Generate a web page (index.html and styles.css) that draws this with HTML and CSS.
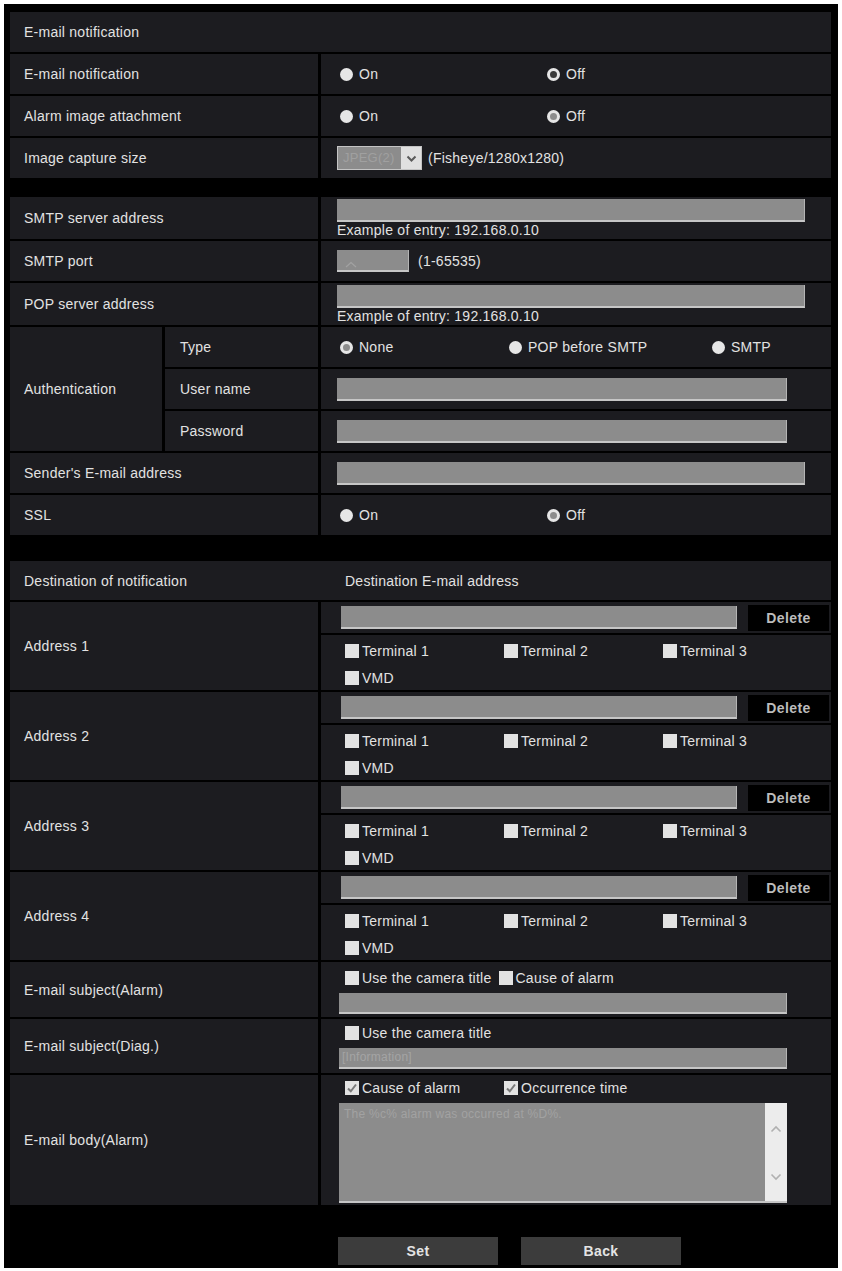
FILE: index.html
```html
<!doctype html>
<html lang="en">
  <head>
    <meta charset="UTF-8" />
    <meta name="viewport" content="width=device-width, initial-scale=1.0">
    <title>E-mail notification</title>
    <link rel="stylesheet" href="styles.css">
  </head>
  <body>
    <div class="panel">

      <!-- general settings -->
      <div class="group">
        <div class="row head">
          <div class="cell label">E-mail notification</div>
        </div>
        <div class="row">
          <div class="cell label">E-mail notification</div>
          <div class="cell value">
            <span class="opt w207"><i class="radio"></i>On</span>
            <span class="opt"><i class="radio sel dark"></i>Off</span>
          </div>
        </div>
        <div class="row">
          <div class="cell label">Alarm image attachment</div>
          <div class="cell value">
            <span class="opt w207"><i class="radio"></i>On</span>
            <span class="opt"><i class="radio sel"></i>Off</span>
          </div>
        </div>
        <div class="row">
          <div class="cell label">Image capture size</div>
          <div class="cell value">
            <div class="select">
              <span class="select-text">JPEG(2)</span>
              <span class="select-arrow">
                <svg width="11" height="7" viewBox="0 0 11 7"><path d="M1.5 1.5l4 4 4-4" stroke="#5a5a5a" stroke-width="2" fill="none"/></svg>
              </span>
            </div>
            <span class="after-select">(Fisheye/1280x1280)</span>
          </div>
        </div>
      </div>

      <!-- server settings -->
      <div class="group">
        <div class="row tall">
          <div class="cell label">SMTP server address</div>
          <div class="cell value stack">
            <div class="input w468"></div>
            <div class="hint">Example of entry: 192.168.0.10</div>
          </div>
        </div>
        <div class="row">
          <div class="cell label">SMTP port</div>
          <div class="cell value">
            <div class="input port">
              <svg width="12" height="7" viewBox="0 0 12 7"><path d="M1 6l5-4.5 5 4.5" stroke="#a2a2a2" stroke-width="1.2" fill="none"/></svg>
            </div>
            <span class="after-port">(1-65535)</span>
          </div>
        </div>
        <div class="row tall">
          <div class="cell label">POP server address</div>
          <div class="cell value stack">
            <div class="input w468"></div>
            <div class="hint">Example of entry: 192.168.0.10</div>
          </div>
        </div>
        <div class="auth">
          <div class="cell label auth-label">Authentication</div>
          <div class="cell label sub">Type</div>
          <div class="cell value">
            <span class="opt w169"><i class="radio sel"></i>None</span>
            <span class="opt w203"><i class="radio"></i>POP before SMTP</span>
            <span class="opt"><i class="radio"></i>SMTP</span>
          </div>
          <div class="cell label sub">User name</div>
          <div class="cell value"><div class="input w450"></div></div>
          <div class="cell label sub">Password</div>
          <div class="cell value"><div class="input w450"></div></div>
        </div>
        <div class="row">
          <div class="cell label">Sender's E-mail address</div>
          <div class="cell value"><div class="input w468"></div></div>
        </div>
        <div class="row">
          <div class="cell label">SSL</div>
          <div class="cell value">
            <span class="opt w207"><i class="radio"></i>On</span>
            <span class="opt"><i class="radio sel"></i>Off</span>
          </div>
        </div>
      </div>

      <!-- destinations -->
      <div class="group">
        <div class="row head dest-head">
          <div class="cell label">
            <span class="dest-left">Destination of notification</span>
            <span class="dest-right">Destination E-mail address</span>
          </div>
        </div>

        <div class="address">
          <div class="cell label addr-label">Address 1</div>
          <div class="cell value addr-input">
            <div class="input w396"></div>
            <button class="delete-btn">Delete</button>
          </div>
          <div class="cell terminals">
            <span class="chk"><i class="box"></i>Terminal 1</span>
            <span class="chk"><i class="box"></i>Terminal 2</span>
            <span class="chk"><i class="box"></i>Terminal 3</span>
            <span class="chk"><i class="box"></i>VMD</span>
          </div>
        </div>
        <div class="address">
          <div class="cell label addr-label">Address 2</div>
          <div class="cell value addr-input">
            <div class="input w396"></div>
            <button class="delete-btn">Delete</button>
          </div>
          <div class="cell terminals">
            <span class="chk"><i class="box"></i>Terminal 1</span>
            <span class="chk"><i class="box"></i>Terminal 2</span>
            <span class="chk"><i class="box"></i>Terminal 3</span>
            <span class="chk"><i class="box"></i>VMD</span>
          </div>
        </div>
        <div class="address">
          <div class="cell label addr-label">Address 3</div>
          <div class="cell value addr-input">
            <div class="input w396"></div>
            <button class="delete-btn">Delete</button>
          </div>
          <div class="cell terminals">
            <span class="chk"><i class="box"></i>Terminal 1</span>
            <span class="chk"><i class="box"></i>Terminal 2</span>
            <span class="chk"><i class="box"></i>Terminal 3</span>
            <span class="chk"><i class="box"></i>VMD</span>
          </div>
        </div>
        <div class="address">
          <div class="cell label addr-label">Address 4</div>
          <div class="cell value addr-input">
            <div class="input w396"></div>
            <button class="delete-btn">Delete</button>
          </div>
          <div class="cell terminals">
            <span class="chk"><i class="box"></i>Terminal 1</span>
            <span class="chk"><i class="box"></i>Terminal 2</span>
            <span class="chk"><i class="box"></i>Terminal 3</span>
            <span class="chk"><i class="box"></i>VMD</span>
          </div>
        </div>

        <div class="row subj-alarm">
          <div class="cell label">E-mail subject(Alarm)</div>
          <div class="cell value stack subj">
            <div class="chk-line">
              <span class="chk inline"><i class="box"></i>Use the camera title</span>
              <span class="chk"><i class="box"></i>Cause of alarm</span>
            </div>
            <div class="input w448 short"></div>
          </div>
        </div>
        <div class="row subj-diag">
          <div class="cell label">E-mail subject(Diag.)</div>
          <div class="cell value stack subj">
            <div class="chk-line">
              <span class="chk"><i class="box"></i>Use the camera title</span>
            </div>
            <div class="input w448 short"><span class="placeholder">[Information]</span></div>
          </div>
        </div>
        <div class="row body-alarm">
          <div class="cell label">E-mail body(Alarm)</div>
          <div class="cell value stack subj">
            <div class="chk-line cols">
              <span class="chk"><i class="box checked"><svg width="14" height="14" viewBox="0 0 14 14"><path d="M3 7.5l2.8 2.8L11 3.5" stroke="#7a7a7a" stroke-width="2" fill="none"/></svg></i>Cause of alarm</span>
              <span class="chk"><i class="box checked"><svg width="14" height="14" viewBox="0 0 14 14"><path d="M3 7.5l2.8 2.8L11 3.5" stroke="#7a7a7a" stroke-width="2" fill="none"/></svg></i>Occurrence time</span>
            </div>
            <div class="textarea">
              <div class="textarea-text">The %c% alarm was occurred at %D%.</div>
              <div class="scrollbar">
                <svg width="12" height="8" viewBox="0 0 12 8"><path d="M1.5 6.5l4.5-4.5 4.5 4.5" stroke="#b0b0b0" stroke-width="1.6" fill="none"/></svg>
                <svg width="12" height="8" viewBox="0 0 12 8"><path d="M1.5 1.5l4.5 4.5 4.5-4.5" stroke="#b0b0b0" stroke-width="1.6" fill="none"/></svg>
              </div>
            </div>
          </div>
        </div>
      </div>

      <div class="footer">
        <button class="action-btn">Set</button>
        <button class="action-btn">Back</button>
      </div>
    </div>
  </body>
</html>
```

FILE: styles.css
```css
body {
  margin: 0;
  padding: 4px 4px 3px;
  background-color: #ffffff;
  font-family: "Liberation Sans", Arial, sans-serif;
  font-size: 14px;
  letter-spacing: 0.25px;
  color: #e2e2e2;
}
.panel {
  background-color: #000;
  padding: 8px 7px 3px 6px;
  display: flex;
  flex-direction: column;
}
.group {
  display: flex;
  flex-direction: column;
  gap: 2px;
}
.group + .group {
  margin-top: 19px;
}
.group + .group + .group {
  margin-top: 26px;
}

/* rows and cells */
.row {
  display: grid;
  grid-template-columns: 308px 510px;
  column-gap: 3px;
  height: 40px;
}
.row.tall {
  height: 42px;
}
.row.head {
  grid-template-columns: 1fr;
}
.cell {
  background-color: #1c1c20;
  display: flex;
  align-items: center;
  white-space: nowrap;
}
.label {
  padding-left: 14px;
}
.value {
  padding-left: 16px;
}
.stack {
  flex-direction: column;
  align-items: flex-start;
  justify-content: flex-start;
  padding-top: 2px;
}
.hint {
  height: 16px;
  line-height: 16px;
}

/* radio buttons */
.opt {
  display: inline-flex;
  align-items: center;
}
.opt:first-child {
  margin-left: 3px;
}
.w207 { width: 207px; }
.w169 { width: 169px; }
.w203 { width: 203px; }
.radio {
  width: 13px;
  height: 13px;
  border-radius: 50%;
  background-color: #e6e6e6;
  margin-right: 6px;
  box-sizing: border-box;
}
.radio.sel {
  background-color: #8c8c8c;
  border: 3px solid #e6e6e6;
}
.radio.sel.dark {
  background-color: #3a3a3a;
}

/* text boxes */
.input {
  height: 23px;
  background-color: #8c8c8c;
  border-bottom: 2px solid #c6c6c6;
  border-right: 1px solid #b4b4b4;
  box-sizing: border-box;
  flex-shrink: 0;
}
.w468 { width: 468px; }
.w450 { width: 450px; }
.w448 { width: 448px; }
.w396 { width: 396px; }
.input.short {
  height: 21px;
}
.input.port {
  width: 72px;
  height: 22px;
  padding: 5px 0 0 8px;
}
.after-port {
  margin-left: 9px;
}
.placeholder {
  display: block;
  padding-left: 3px;
  font-size: 12px;
  line-height: 19px;
  color: #a4a4a4;
}

/* select box */
.select {
  display: flex;
  width: 85px;
  height: 24px;
  border: 1px solid #c4c4c4;
  box-sizing: border-box;
  background-color: #8c8c8c;
}
.select-text {
  flex: 1;
  padding-left: 5px;
  font-size: 13px;
  line-height: 22px;
  color: #a0a0a0;
}
.select-arrow {
  width: 20px;
  background-color: #e0e0e0;
  display: flex;
  align-items: center;
  justify-content: center;
}
.after-select {
  margin-left: 6px;
}

/* authentication block */
.auth {
  display: grid;
  grid-template-columns: 152px 153px 510px;
  grid-template-rows: 40px 40px 40px;
  column-gap: 3px;
  row-gap: 2px;
}
.auth-label {
  grid-row: 1 / span 3;
}
.sub {
  padding-left: 15px;
}

/* destination list */
.dest-head {
  height: 39px;
}
.dest-left {
  width: 297px;
}
.dest-right {
  padding-left: 24px;
}
.address {
  display: grid;
  grid-template-columns: 308px 510px;
  grid-template-rows: 31px 55px;
  column-gap: 3px;
  row-gap: 2px;
}
.addr-label {
  grid-row: 1 / span 2;
}
.addr-input {
  padding-left: 20px;
}
.delete-btn {
  margin-left: 11px;
  width: 81px;
  height: 26px;
  border: none;
  background-color: #000;
  color: #bcbcbc;
  font-family: inherit;
  font-size: 14px;
  font-weight: bold;
  letter-spacing: 0.4px;
  padding: 0;
}
.terminals {
  display: grid;
  grid-template-columns: 159px 159px 159px;
  grid-auto-rows: 18px;
  row-gap: 9px;
  align-items: center;
  align-content: start;
  padding: 7px 0 0 24px;
}

/* check boxes */
.chk {
  display: inline-flex;
  align-items: center;
  height: 18px;
}
.box {
  width: 14px;
  height: 14px;
  background-color: #e2e2e2;
  margin-right: 3px;
  display: inline-flex;
  flex-shrink: 0;
}
.chk.inline {
  margin-right: 7px;
}
.chk-line {
  display: flex;
  padding-left: 6px;
  margin-bottom: 6px;
}
.chk-line.cols .chk {
  width: 159px;
}

/* subject and body rows */
.subj {
  padding-left: 18px;
}
.subj-alarm {
  height: 55px;
}
.subj-alarm .subj {
  padding-top: 7px;
}
.subj-diag {
  height: 54px;
}
.subj-diag .subj {
  padding-top: 5px;
}
.body-alarm {
  height: 130px;
}
.body-alarm .subj {
  padding-top: 4px;
}
.textarea {
  width: 448px;
  height: 100px;
  display: flex;
  background-color: #8c8c8c;
  border-bottom: 2px solid #c6c6c6;
  box-sizing: border-box;
}
.textarea-text {
  flex: 1;
  padding: 4px 0 0 5px;
  font-size: 12px;
  color: #a2a2a2;
}
.scrollbar {
  width: 22px;
  background-color: #ececec;
  display: flex;
  flex-direction: column;
  align-items: center;
  justify-content: space-between;
  padding: 22px 0 20px;
  box-sizing: border-box;
}

/* footer buttons */
.footer {
  display: flex;
  gap: 23px;
  padding: 32px 0 0 328px;
}
.action-btn {
  width: 160px;
  height: 28px;
  border: none;
  background-color: #3c3c3c;
  color: #e4e4e4;
  font-family: inherit;
  font-size: 14px;
  font-weight: bold;
  letter-spacing: 0.4px;
  padding: 0;
}
```
